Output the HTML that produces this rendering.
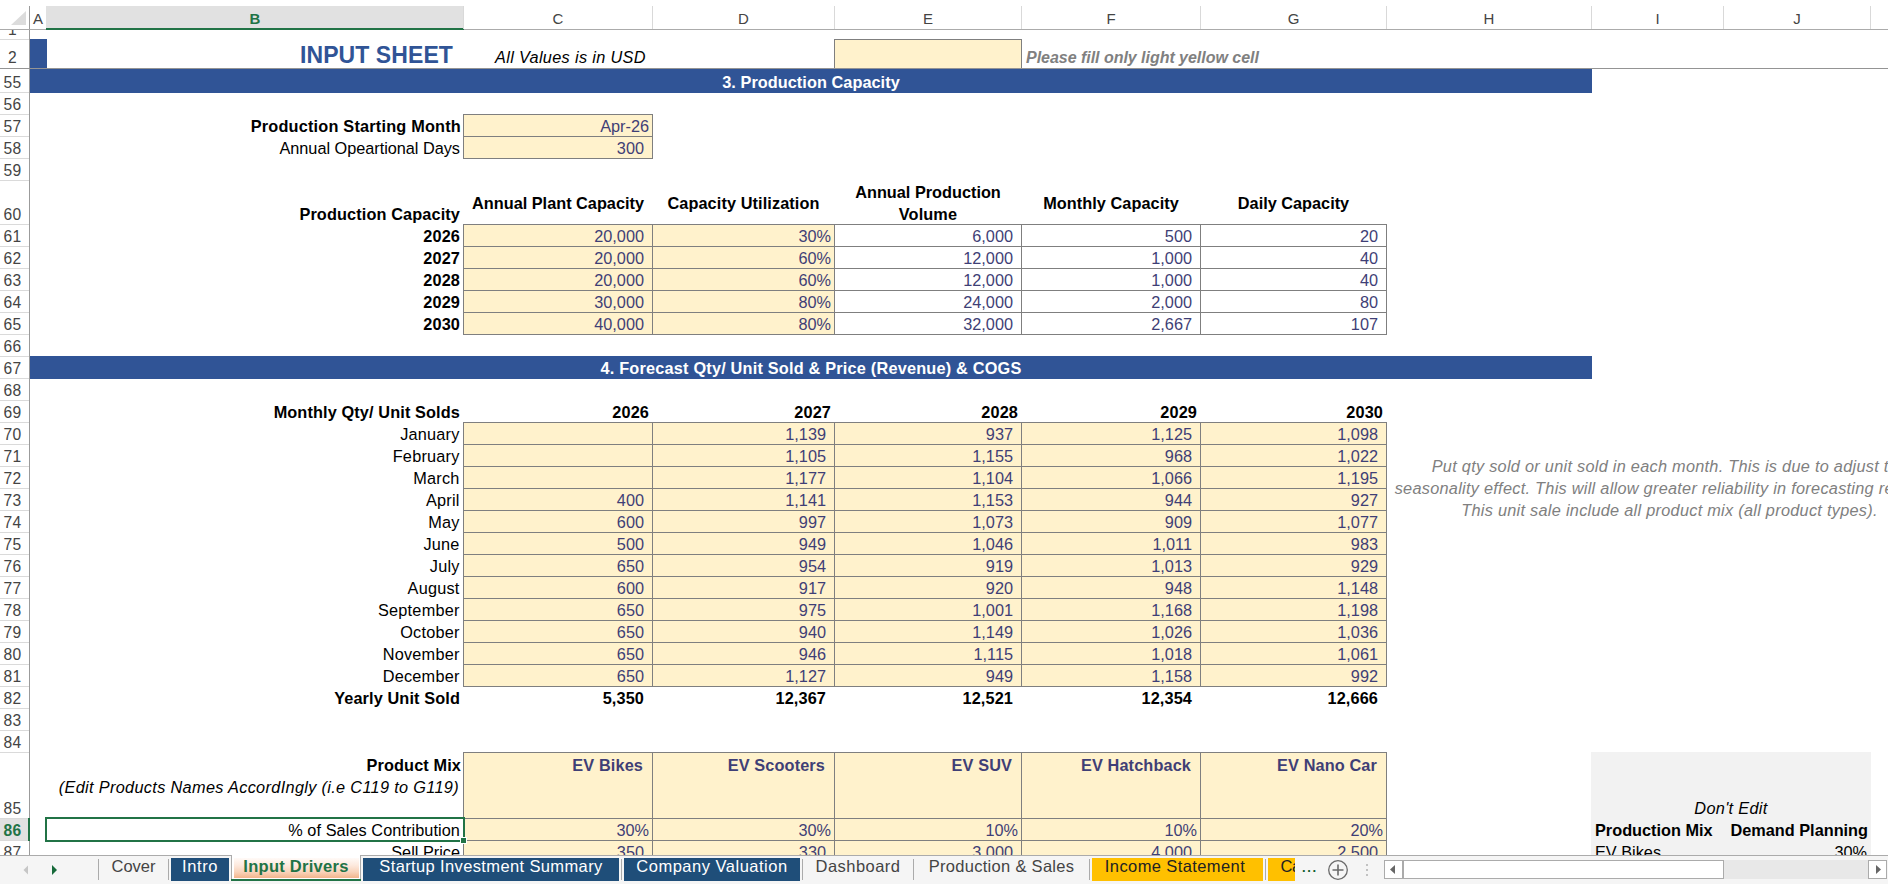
<!DOCTYPE html><html><head><meta charset="utf-8"><title>Input Drivers</title><style>
*{margin:0;padding:0;box-sizing:border-box}
html,body{width:1888px;height:884px;overflow:hidden;background:#fff}
body{position:relative;font-family:"Liberation Sans", sans-serif;font-size:16.3px;color:#000}
.a{position:absolute;white-space:nowrap}
.t{position:absolute;white-space:nowrap;line-height:22px;height:22px}
.r{text-align:right}
.c{text-align:center}
.b{font-weight:bold;letter-spacing:0.12px}
.i{font-style:italic;letter-spacing:0.33px}
.n{color:#3f3f76}
.rh{position:absolute;left:0;width:25px;text-align:center;font-size:15.6px;letter-spacing:0.4px;color:#444;line-height:20.4px;height:20px}
.ch{position:absolute;top:6px;height:23px;line-height:26px;text-align:center;font-size:15px;color:#444}
.tab{position:absolute;top:858px;height:23px;line-height:17px;font-size:16.5px;text-align:center;white-space:nowrap;color:#444}
.sep{position:absolute;top:859px;height:21px;width:1px;background:#ababab}
</style></head><body>
<div class="a" style="left:30px;top:39px;width:17px;height:30px;background:#305496;"></div>
<div class="a" style="left:30px;top:69px;width:1562px;height:24px;background:#305496;"></div>
<div class="a" style="left:30px;top:356px;width:1562px;height:23px;background:#305496;"></div>
<div class="a" style="left:1591px;top:752px;width:280px;height:105px;background:#f2f2f2;"></div>
<div class="a" style="left:834px;top:39px;width:188px;height:30px;background:#fff2cc;border:1px solid #7f7f7f;"></div>
<div class="a" style="left:463px;top:114px;width:190px;height:23px;background:#fff2cc;border:1px solid #7f7f7f;"></div>
<div class="a" style="left:463px;top:136px;width:190px;height:23px;background:#fff2cc;border:1px solid #7f7f7f;"></div>
<div class="a" style="left:463px;top:224px;width:190px;height:23px;background:#fff2cc;border:1px solid #7f7f7f;"></div>
<div class="a" style="left:652px;top:224px;width:183px;height:23px;background:#fff2cc;border:1px solid #7f7f7f;"></div>
<div class="a" style="left:834px;top:224px;width:188px;height:23px;background:#fff;border:1px solid #7f7f7f;"></div>
<div class="a" style="left:1021px;top:224px;width:180px;height:23px;background:#fff;border:1px solid #7f7f7f;"></div>
<div class="a" style="left:1200px;top:224px;width:187px;height:23px;background:#fff;border:1px solid #7f7f7f;"></div>
<div class="a" style="left:463px;top:246px;width:190px;height:23px;background:#fff2cc;border:1px solid #7f7f7f;"></div>
<div class="a" style="left:652px;top:246px;width:183px;height:23px;background:#fff2cc;border:1px solid #7f7f7f;"></div>
<div class="a" style="left:834px;top:246px;width:188px;height:23px;background:#fff;border:1px solid #7f7f7f;"></div>
<div class="a" style="left:1021px;top:246px;width:180px;height:23px;background:#fff;border:1px solid #7f7f7f;"></div>
<div class="a" style="left:1200px;top:246px;width:187px;height:23px;background:#fff;border:1px solid #7f7f7f;"></div>
<div class="a" style="left:463px;top:268px;width:190px;height:23px;background:#fff2cc;border:1px solid #7f7f7f;"></div>
<div class="a" style="left:652px;top:268px;width:183px;height:23px;background:#fff2cc;border:1px solid #7f7f7f;"></div>
<div class="a" style="left:834px;top:268px;width:188px;height:23px;background:#fff;border:1px solid #7f7f7f;"></div>
<div class="a" style="left:1021px;top:268px;width:180px;height:23px;background:#fff;border:1px solid #7f7f7f;"></div>
<div class="a" style="left:1200px;top:268px;width:187px;height:23px;background:#fff;border:1px solid #7f7f7f;"></div>
<div class="a" style="left:463px;top:290px;width:190px;height:23px;background:#fff2cc;border:1px solid #7f7f7f;"></div>
<div class="a" style="left:652px;top:290px;width:183px;height:23px;background:#fff2cc;border:1px solid #7f7f7f;"></div>
<div class="a" style="left:834px;top:290px;width:188px;height:23px;background:#fff;border:1px solid #7f7f7f;"></div>
<div class="a" style="left:1021px;top:290px;width:180px;height:23px;background:#fff;border:1px solid #7f7f7f;"></div>
<div class="a" style="left:1200px;top:290px;width:187px;height:23px;background:#fff;border:1px solid #7f7f7f;"></div>
<div class="a" style="left:463px;top:312px;width:190px;height:23px;background:#fff2cc;border:1px solid #7f7f7f;"></div>
<div class="a" style="left:652px;top:312px;width:183px;height:23px;background:#fff2cc;border:1px solid #7f7f7f;"></div>
<div class="a" style="left:834px;top:312px;width:188px;height:23px;background:#fff;border:1px solid #7f7f7f;"></div>
<div class="a" style="left:1021px;top:312px;width:180px;height:23px;background:#fff;border:1px solid #7f7f7f;"></div>
<div class="a" style="left:1200px;top:312px;width:187px;height:23px;background:#fff;border:1px solid #7f7f7f;"></div>
<div class="a" style="left:463px;top:422px;width:190px;height:23px;background:#fff2cc;border:1px solid #7f7f7f;"></div>
<div class="a" style="left:652px;top:422px;width:183px;height:23px;background:#fff2cc;border:1px solid #7f7f7f;"></div>
<div class="a" style="left:834px;top:422px;width:188px;height:23px;background:#fff2cc;border:1px solid #7f7f7f;"></div>
<div class="a" style="left:1021px;top:422px;width:180px;height:23px;background:#fff2cc;border:1px solid #7f7f7f;"></div>
<div class="a" style="left:1200px;top:422px;width:187px;height:23px;background:#fff2cc;border:1px solid #7f7f7f;"></div>
<div class="a" style="left:463px;top:444px;width:190px;height:23px;background:#fff2cc;border:1px solid #7f7f7f;"></div>
<div class="a" style="left:652px;top:444px;width:183px;height:23px;background:#fff2cc;border:1px solid #7f7f7f;"></div>
<div class="a" style="left:834px;top:444px;width:188px;height:23px;background:#fff2cc;border:1px solid #7f7f7f;"></div>
<div class="a" style="left:1021px;top:444px;width:180px;height:23px;background:#fff2cc;border:1px solid #7f7f7f;"></div>
<div class="a" style="left:1200px;top:444px;width:187px;height:23px;background:#fff2cc;border:1px solid #7f7f7f;"></div>
<div class="a" style="left:463px;top:466px;width:190px;height:23px;background:#fff2cc;border:1px solid #7f7f7f;"></div>
<div class="a" style="left:652px;top:466px;width:183px;height:23px;background:#fff2cc;border:1px solid #7f7f7f;"></div>
<div class="a" style="left:834px;top:466px;width:188px;height:23px;background:#fff2cc;border:1px solid #7f7f7f;"></div>
<div class="a" style="left:1021px;top:466px;width:180px;height:23px;background:#fff2cc;border:1px solid #7f7f7f;"></div>
<div class="a" style="left:1200px;top:466px;width:187px;height:23px;background:#fff2cc;border:1px solid #7f7f7f;"></div>
<div class="a" style="left:463px;top:488px;width:190px;height:23px;background:#fff2cc;border:1px solid #7f7f7f;"></div>
<div class="a" style="left:652px;top:488px;width:183px;height:23px;background:#fff2cc;border:1px solid #7f7f7f;"></div>
<div class="a" style="left:834px;top:488px;width:188px;height:23px;background:#fff2cc;border:1px solid #7f7f7f;"></div>
<div class="a" style="left:1021px;top:488px;width:180px;height:23px;background:#fff2cc;border:1px solid #7f7f7f;"></div>
<div class="a" style="left:1200px;top:488px;width:187px;height:23px;background:#fff2cc;border:1px solid #7f7f7f;"></div>
<div class="a" style="left:463px;top:510px;width:190px;height:23px;background:#fff2cc;border:1px solid #7f7f7f;"></div>
<div class="a" style="left:652px;top:510px;width:183px;height:23px;background:#fff2cc;border:1px solid #7f7f7f;"></div>
<div class="a" style="left:834px;top:510px;width:188px;height:23px;background:#fff2cc;border:1px solid #7f7f7f;"></div>
<div class="a" style="left:1021px;top:510px;width:180px;height:23px;background:#fff2cc;border:1px solid #7f7f7f;"></div>
<div class="a" style="left:1200px;top:510px;width:187px;height:23px;background:#fff2cc;border:1px solid #7f7f7f;"></div>
<div class="a" style="left:463px;top:532px;width:190px;height:23px;background:#fff2cc;border:1px solid #7f7f7f;"></div>
<div class="a" style="left:652px;top:532px;width:183px;height:23px;background:#fff2cc;border:1px solid #7f7f7f;"></div>
<div class="a" style="left:834px;top:532px;width:188px;height:23px;background:#fff2cc;border:1px solid #7f7f7f;"></div>
<div class="a" style="left:1021px;top:532px;width:180px;height:23px;background:#fff2cc;border:1px solid #7f7f7f;"></div>
<div class="a" style="left:1200px;top:532px;width:187px;height:23px;background:#fff2cc;border:1px solid #7f7f7f;"></div>
<div class="a" style="left:463px;top:554px;width:190px;height:23px;background:#fff2cc;border:1px solid #7f7f7f;"></div>
<div class="a" style="left:652px;top:554px;width:183px;height:23px;background:#fff2cc;border:1px solid #7f7f7f;"></div>
<div class="a" style="left:834px;top:554px;width:188px;height:23px;background:#fff2cc;border:1px solid #7f7f7f;"></div>
<div class="a" style="left:1021px;top:554px;width:180px;height:23px;background:#fff2cc;border:1px solid #7f7f7f;"></div>
<div class="a" style="left:1200px;top:554px;width:187px;height:23px;background:#fff2cc;border:1px solid #7f7f7f;"></div>
<div class="a" style="left:463px;top:576px;width:190px;height:23px;background:#fff2cc;border:1px solid #7f7f7f;"></div>
<div class="a" style="left:652px;top:576px;width:183px;height:23px;background:#fff2cc;border:1px solid #7f7f7f;"></div>
<div class="a" style="left:834px;top:576px;width:188px;height:23px;background:#fff2cc;border:1px solid #7f7f7f;"></div>
<div class="a" style="left:1021px;top:576px;width:180px;height:23px;background:#fff2cc;border:1px solid #7f7f7f;"></div>
<div class="a" style="left:1200px;top:576px;width:187px;height:23px;background:#fff2cc;border:1px solid #7f7f7f;"></div>
<div class="a" style="left:463px;top:598px;width:190px;height:23px;background:#fff2cc;border:1px solid #7f7f7f;"></div>
<div class="a" style="left:652px;top:598px;width:183px;height:23px;background:#fff2cc;border:1px solid #7f7f7f;"></div>
<div class="a" style="left:834px;top:598px;width:188px;height:23px;background:#fff2cc;border:1px solid #7f7f7f;"></div>
<div class="a" style="left:1021px;top:598px;width:180px;height:23px;background:#fff2cc;border:1px solid #7f7f7f;"></div>
<div class="a" style="left:1200px;top:598px;width:187px;height:23px;background:#fff2cc;border:1px solid #7f7f7f;"></div>
<div class="a" style="left:463px;top:620px;width:190px;height:23px;background:#fff2cc;border:1px solid #7f7f7f;"></div>
<div class="a" style="left:652px;top:620px;width:183px;height:23px;background:#fff2cc;border:1px solid #7f7f7f;"></div>
<div class="a" style="left:834px;top:620px;width:188px;height:23px;background:#fff2cc;border:1px solid #7f7f7f;"></div>
<div class="a" style="left:1021px;top:620px;width:180px;height:23px;background:#fff2cc;border:1px solid #7f7f7f;"></div>
<div class="a" style="left:1200px;top:620px;width:187px;height:23px;background:#fff2cc;border:1px solid #7f7f7f;"></div>
<div class="a" style="left:463px;top:642px;width:190px;height:23px;background:#fff2cc;border:1px solid #7f7f7f;"></div>
<div class="a" style="left:652px;top:642px;width:183px;height:23px;background:#fff2cc;border:1px solid #7f7f7f;"></div>
<div class="a" style="left:834px;top:642px;width:188px;height:23px;background:#fff2cc;border:1px solid #7f7f7f;"></div>
<div class="a" style="left:1021px;top:642px;width:180px;height:23px;background:#fff2cc;border:1px solid #7f7f7f;"></div>
<div class="a" style="left:1200px;top:642px;width:187px;height:23px;background:#fff2cc;border:1px solid #7f7f7f;"></div>
<div class="a" style="left:463px;top:664px;width:190px;height:23px;background:#fff2cc;border:1px solid #7f7f7f;"></div>
<div class="a" style="left:652px;top:664px;width:183px;height:23px;background:#fff2cc;border:1px solid #7f7f7f;"></div>
<div class="a" style="left:834px;top:664px;width:188px;height:23px;background:#fff2cc;border:1px solid #7f7f7f;"></div>
<div class="a" style="left:1021px;top:664px;width:180px;height:23px;background:#fff2cc;border:1px solid #7f7f7f;"></div>
<div class="a" style="left:1200px;top:664px;width:187px;height:23px;background:#fff2cc;border:1px solid #7f7f7f;"></div>
<div class="a" style="left:463px;top:752px;width:190px;height:67px;background:#fff2cc;border:1px solid #7f7f7f;"></div>
<div class="a" style="left:652px;top:752px;width:183px;height:67px;background:#fff2cc;border:1px solid #7f7f7f;"></div>
<div class="a" style="left:834px;top:752px;width:188px;height:67px;background:#fff2cc;border:1px solid #7f7f7f;"></div>
<div class="a" style="left:1021px;top:752px;width:180px;height:67px;background:#fff2cc;border:1px solid #7f7f7f;"></div>
<div class="a" style="left:1200px;top:752px;width:187px;height:67px;background:#fff2cc;border:1px solid #7f7f7f;"></div>
<div class="a" style="left:463px;top:818px;width:190px;height:23px;background:#fff2cc;border:1px solid #7f7f7f;"></div>
<div class="a" style="left:652px;top:818px;width:183px;height:23px;background:#fff2cc;border:1px solid #7f7f7f;"></div>
<div class="a" style="left:834px;top:818px;width:188px;height:23px;background:#fff2cc;border:1px solid #7f7f7f;"></div>
<div class="a" style="left:1021px;top:818px;width:180px;height:23px;background:#fff2cc;border:1px solid #7f7f7f;"></div>
<div class="a" style="left:1200px;top:818px;width:187px;height:23px;background:#fff2cc;border:1px solid #7f7f7f;"></div>
<div class="a" style="left:463px;top:840px;width:190px;height:23px;background:#fff2cc;border:1px solid #7f7f7f;"></div>
<div class="a" style="left:652px;top:840px;width:183px;height:23px;background:#fff2cc;border:1px solid #7f7f7f;"></div>
<div class="a" style="left:834px;top:840px;width:188px;height:23px;background:#fff2cc;border:1px solid #7f7f7f;"></div>
<div class="a" style="left:1021px;top:840px;width:180px;height:23px;background:#fff2cc;border:1px solid #7f7f7f;"></div>
<div class="a" style="left:1200px;top:840px;width:187px;height:23px;background:#fff2cc;border:1px solid #7f7f7f;"></div>
<div class="a b" style="left:300px;top:42px;font-size:23px;line-height:27px;color:#305496;letter-spacing:0.08px">INPUT SHEET</div>
<div class="a i" style="left:495px;top:46px;line-height:22px">All Values is in USD</div>
<div class="a b i" style="left:1026px;top:47px;font-size:16px;line-height:22px;color:#808080;letter-spacing:-0.03px">Please fill only light yellow cell</div>
<div class="t b c" style="left:30px;width:1562px;top:71px;color:#fff;letter-spacing:0.05px">3. Production Capacity</div>
<div class="t b c" style="left:30px;width:1562px;top:357px;color:#fff;letter-spacing:0.2px">4. Forecast Qty/ Unit Sold &amp; Price (Revenue) &amp; COGS</div>
<div class="t b" style="left:47px;top:115px;width:416px;text-align:right;padding-right:2px;letter-spacing:0.2px;">Production Starting Month</div>
<div class="t " style="left:47px;top:137px;width:416px;text-align:right;padding-right:3px;letter-spacing:-0.02px;">Annual Opeartional Days</div>
<div class="t n" style="left:464px;top:115px;width:188px;text-align:right;padding-right:3px;">Apr-26</div>
<div class="t n" style="left:464px;top:137px;width:188px;text-align:right;padding-right:8px;">300</div>
<div class="t b" style="left:47px;top:203px;width:416px;text-align:right;padding-right:3px;">Production Capacity</div>
<div class="t b" style="left:464px;top:192px;width:188px;text-align:center;letter-spacing:0;">Annual Plant Capacity</div>
<div class="t b" style="left:653px;top:192px;width:181px;text-align:center;letter-spacing:0.1px;">Capacity Utilization</div>
<div class="t b" style="left:835px;top:181px;width:186px;text-align:center;letter-spacing:0;">Annual Production</div>
<div class="t b" style="left:835px;top:203px;width:186px;text-align:center;">Volume</div>
<div class="t b" style="left:1022px;top:192px;width:178px;text-align:center;letter-spacing:0.05px;">Monthly Capacity</div>
<div class="t b" style="left:1201px;top:192px;width:185px;text-align:center;letter-spacing:0;">Daily Capacity</div>
<div class="t b" style="left:47px;top:225px;width:416px;text-align:right;padding-right:3px;">2026</div>
<div class="t n" style="left:464px;top:225px;width:188px;text-align:right;padding-right:8px;">20,000</div>
<div class="t n" style="left:653px;top:225px;width:181px;text-align:right;padding-right:3px;">30%</div>
<div class="t n" style="left:835px;top:225px;width:186px;text-align:right;padding-right:8px;">6,000</div>
<div class="t n" style="left:1022px;top:225px;width:178px;text-align:right;padding-right:8px;">500</div>
<div class="t n" style="left:1201px;top:225px;width:185px;text-align:right;padding-right:8px;">20</div>
<div class="t b" style="left:47px;top:247px;width:416px;text-align:right;padding-right:3px;">2027</div>
<div class="t n" style="left:464px;top:247px;width:188px;text-align:right;padding-right:8px;">20,000</div>
<div class="t n" style="left:653px;top:247px;width:181px;text-align:right;padding-right:3px;">60%</div>
<div class="t n" style="left:835px;top:247px;width:186px;text-align:right;padding-right:8px;">12,000</div>
<div class="t n" style="left:1022px;top:247px;width:178px;text-align:right;padding-right:8px;">1,000</div>
<div class="t n" style="left:1201px;top:247px;width:185px;text-align:right;padding-right:8px;">40</div>
<div class="t b" style="left:47px;top:269px;width:416px;text-align:right;padding-right:3px;">2028</div>
<div class="t n" style="left:464px;top:269px;width:188px;text-align:right;padding-right:8px;">20,000</div>
<div class="t n" style="left:653px;top:269px;width:181px;text-align:right;padding-right:3px;">60%</div>
<div class="t n" style="left:835px;top:269px;width:186px;text-align:right;padding-right:8px;">12,000</div>
<div class="t n" style="left:1022px;top:269px;width:178px;text-align:right;padding-right:8px;">1,000</div>
<div class="t n" style="left:1201px;top:269px;width:185px;text-align:right;padding-right:8px;">40</div>
<div class="t b" style="left:47px;top:291px;width:416px;text-align:right;padding-right:3px;">2029</div>
<div class="t n" style="left:464px;top:291px;width:188px;text-align:right;padding-right:8px;">30,000</div>
<div class="t n" style="left:653px;top:291px;width:181px;text-align:right;padding-right:3px;">80%</div>
<div class="t n" style="left:835px;top:291px;width:186px;text-align:right;padding-right:8px;">24,000</div>
<div class="t n" style="left:1022px;top:291px;width:178px;text-align:right;padding-right:8px;">2,000</div>
<div class="t n" style="left:1201px;top:291px;width:185px;text-align:right;padding-right:8px;">80</div>
<div class="t b" style="left:47px;top:313px;width:416px;text-align:right;padding-right:3px;">2030</div>
<div class="t n" style="left:464px;top:313px;width:188px;text-align:right;padding-right:8px;">40,000</div>
<div class="t n" style="left:653px;top:313px;width:181px;text-align:right;padding-right:3px;">80%</div>
<div class="t n" style="left:835px;top:313px;width:186px;text-align:right;padding-right:8px;">32,000</div>
<div class="t n" style="left:1022px;top:313px;width:178px;text-align:right;padding-right:8px;">2,667</div>
<div class="t n" style="left:1201px;top:313px;width:185px;text-align:right;padding-right:8px;">107</div>
<div class="t b" style="left:47px;top:401px;width:416px;text-align:right;padding-right:3px;">Monthly Qty/ Unit Solds</div>
<div class="t b" style="left:464px;top:401px;width:188px;text-align:right;padding-right:3px;">2026</div>
<div class="t b" style="left:653px;top:401px;width:181px;text-align:right;padding-right:3px;">2027</div>
<div class="t b" style="left:835px;top:401px;width:186px;text-align:right;padding-right:3px;">2028</div>
<div class="t b" style="left:1022px;top:401px;width:178px;text-align:right;padding-right:3px;">2029</div>
<div class="t b" style="left:1201px;top:401px;width:185px;text-align:right;padding-right:3px;">2030</div>
<div class="t " style="left:47px;top:423px;width:416px;text-align:right;padding-right:3.4px;letter-spacing:0.22px;">January</div>
<div class="t n" style="left:653px;top:423px;width:181px;text-align:right;padding-right:8px;">1,139</div>
<div class="t n" style="left:835px;top:423px;width:186px;text-align:right;padding-right:8px;">937</div>
<div class="t n" style="left:1022px;top:423px;width:178px;text-align:right;padding-right:8px;">1,125</div>
<div class="t n" style="left:1201px;top:423px;width:185px;text-align:right;padding-right:8px;">1,098</div>
<div class="t " style="left:47px;top:445px;width:416px;text-align:right;padding-right:3.4px;letter-spacing:0.22px;">February</div>
<div class="t n" style="left:653px;top:445px;width:181px;text-align:right;padding-right:8px;">1,105</div>
<div class="t n" style="left:835px;top:445px;width:186px;text-align:right;padding-right:8px;">1,155</div>
<div class="t n" style="left:1022px;top:445px;width:178px;text-align:right;padding-right:8px;">968</div>
<div class="t n" style="left:1201px;top:445px;width:185px;text-align:right;padding-right:8px;">1,022</div>
<div class="t " style="left:47px;top:467px;width:416px;text-align:right;padding-right:3.4px;letter-spacing:0.22px;">March</div>
<div class="t n" style="left:653px;top:467px;width:181px;text-align:right;padding-right:8px;">1,177</div>
<div class="t n" style="left:835px;top:467px;width:186px;text-align:right;padding-right:8px;">1,104</div>
<div class="t n" style="left:1022px;top:467px;width:178px;text-align:right;padding-right:8px;">1,066</div>
<div class="t n" style="left:1201px;top:467px;width:185px;text-align:right;padding-right:8px;">1,195</div>
<div class="t " style="left:47px;top:489px;width:416px;text-align:right;padding-right:3.4px;letter-spacing:0.22px;">April</div>
<div class="t n" style="left:464px;top:489px;width:188px;text-align:right;padding-right:8px;">400</div>
<div class="t n" style="left:653px;top:489px;width:181px;text-align:right;padding-right:8px;">1,141</div>
<div class="t n" style="left:835px;top:489px;width:186px;text-align:right;padding-right:8px;">1,153</div>
<div class="t n" style="left:1022px;top:489px;width:178px;text-align:right;padding-right:8px;">944</div>
<div class="t n" style="left:1201px;top:489px;width:185px;text-align:right;padding-right:8px;">927</div>
<div class="t " style="left:47px;top:511px;width:416px;text-align:right;padding-right:3.4px;letter-spacing:0.22px;">May</div>
<div class="t n" style="left:464px;top:511px;width:188px;text-align:right;padding-right:8px;">600</div>
<div class="t n" style="left:653px;top:511px;width:181px;text-align:right;padding-right:8px;">997</div>
<div class="t n" style="left:835px;top:511px;width:186px;text-align:right;padding-right:8px;">1,073</div>
<div class="t n" style="left:1022px;top:511px;width:178px;text-align:right;padding-right:8px;">909</div>
<div class="t n" style="left:1201px;top:511px;width:185px;text-align:right;padding-right:8px;">1,077</div>
<div class="t " style="left:47px;top:533px;width:416px;text-align:right;padding-right:3.4px;letter-spacing:0.22px;">June</div>
<div class="t n" style="left:464px;top:533px;width:188px;text-align:right;padding-right:8px;">500</div>
<div class="t n" style="left:653px;top:533px;width:181px;text-align:right;padding-right:8px;">949</div>
<div class="t n" style="left:835px;top:533px;width:186px;text-align:right;padding-right:8px;">1,046</div>
<div class="t n" style="left:1022px;top:533px;width:178px;text-align:right;padding-right:8px;">1,011</div>
<div class="t n" style="left:1201px;top:533px;width:185px;text-align:right;padding-right:8px;">983</div>
<div class="t " style="left:47px;top:555px;width:416px;text-align:right;padding-right:3.4px;letter-spacing:0.22px;">July</div>
<div class="t n" style="left:464px;top:555px;width:188px;text-align:right;padding-right:8px;">650</div>
<div class="t n" style="left:653px;top:555px;width:181px;text-align:right;padding-right:8px;">954</div>
<div class="t n" style="left:835px;top:555px;width:186px;text-align:right;padding-right:8px;">919</div>
<div class="t n" style="left:1022px;top:555px;width:178px;text-align:right;padding-right:8px;">1,013</div>
<div class="t n" style="left:1201px;top:555px;width:185px;text-align:right;padding-right:8px;">929</div>
<div class="t " style="left:47px;top:577px;width:416px;text-align:right;padding-right:3.4px;letter-spacing:0.22px;">August</div>
<div class="t n" style="left:464px;top:577px;width:188px;text-align:right;padding-right:8px;">600</div>
<div class="t n" style="left:653px;top:577px;width:181px;text-align:right;padding-right:8px;">917</div>
<div class="t n" style="left:835px;top:577px;width:186px;text-align:right;padding-right:8px;">920</div>
<div class="t n" style="left:1022px;top:577px;width:178px;text-align:right;padding-right:8px;">948</div>
<div class="t n" style="left:1201px;top:577px;width:185px;text-align:right;padding-right:8px;">1,148</div>
<div class="t " style="left:47px;top:599px;width:416px;text-align:right;padding-right:3.4px;letter-spacing:0.22px;">September</div>
<div class="t n" style="left:464px;top:599px;width:188px;text-align:right;padding-right:8px;">650</div>
<div class="t n" style="left:653px;top:599px;width:181px;text-align:right;padding-right:8px;">975</div>
<div class="t n" style="left:835px;top:599px;width:186px;text-align:right;padding-right:8px;">1,001</div>
<div class="t n" style="left:1022px;top:599px;width:178px;text-align:right;padding-right:8px;">1,168</div>
<div class="t n" style="left:1201px;top:599px;width:185px;text-align:right;padding-right:8px;">1,198</div>
<div class="t " style="left:47px;top:621px;width:416px;text-align:right;padding-right:3.4px;letter-spacing:0.22px;">October</div>
<div class="t n" style="left:464px;top:621px;width:188px;text-align:right;padding-right:8px;">650</div>
<div class="t n" style="left:653px;top:621px;width:181px;text-align:right;padding-right:8px;">940</div>
<div class="t n" style="left:835px;top:621px;width:186px;text-align:right;padding-right:8px;">1,149</div>
<div class="t n" style="left:1022px;top:621px;width:178px;text-align:right;padding-right:8px;">1,026</div>
<div class="t n" style="left:1201px;top:621px;width:185px;text-align:right;padding-right:8px;">1,036</div>
<div class="t " style="left:47px;top:643px;width:416px;text-align:right;padding-right:3.4px;letter-spacing:0.22px;">November</div>
<div class="t n" style="left:464px;top:643px;width:188px;text-align:right;padding-right:8px;">650</div>
<div class="t n" style="left:653px;top:643px;width:181px;text-align:right;padding-right:8px;">946</div>
<div class="t n" style="left:835px;top:643px;width:186px;text-align:right;padding-right:8px;">1,115</div>
<div class="t n" style="left:1022px;top:643px;width:178px;text-align:right;padding-right:8px;">1,018</div>
<div class="t n" style="left:1201px;top:643px;width:185px;text-align:right;padding-right:8px;">1,061</div>
<div class="t " style="left:47px;top:665px;width:416px;text-align:right;padding-right:3.4px;letter-spacing:0.22px;">December</div>
<div class="t n" style="left:464px;top:665px;width:188px;text-align:right;padding-right:8px;">650</div>
<div class="t n" style="left:653px;top:665px;width:181px;text-align:right;padding-right:8px;">1,127</div>
<div class="t n" style="left:835px;top:665px;width:186px;text-align:right;padding-right:8px;">949</div>
<div class="t n" style="left:1022px;top:665px;width:178px;text-align:right;padding-right:8px;">1,158</div>
<div class="t n" style="left:1201px;top:665px;width:185px;text-align:right;padding-right:8px;">992</div>
<div class="t b" style="left:47px;top:687px;width:416px;text-align:right;padding-right:3px;">Yearly Unit Sold</div>
<div class="t b" style="left:464px;top:687px;width:188px;text-align:right;padding-right:8px;">5,350</div>
<div class="t b" style="left:653px;top:687px;width:181px;text-align:right;padding-right:8px;">12,367</div>
<div class="t b" style="left:835px;top:687px;width:186px;text-align:right;padding-right:8px;">12,521</div>
<div class="t b" style="left:1022px;top:687px;width:178px;text-align:right;padding-right:8px;">12,354</div>
<div class="t b" style="left:1201px;top:687px;width:185px;text-align:right;padding-right:8px;">12,666</div>
<div class="t b r" style="left:47px;width:416px;top:754px;padding-right:2px">Product Mix</div>
<div class="t i r" style="left:47px;width:416px;top:776px;padding-right:4px">(Edit Products Names AccordIngly (i.e C119 to G119)</div>
<div class="t b r n" style="left:464px;width:188px;top:754px;padding-right:9px">EV Bikes</div>
<div class="t b r n" style="left:653px;width:181px;top:754px;padding-right:9px">EV Scooters</div>
<div class="t b r n" style="left:835px;width:186px;top:754px;padding-right:9px">EV SUV</div>
<div class="t b r n" style="left:1022px;width:178px;top:754px;padding-right:9px">EV Hatchback</div>
<div class="t b r n" style="left:1201px;width:185px;top:754px;padding-right:9px">EV Nano Car</div>
<div class="t " style="left:47px;top:819px;width:416px;text-align:right;padding-right:3px;letter-spacing:0.07px;">% of Sales Contribution</div>
<div class="t n" style="left:464px;top:819px;width:188px;text-align:right;padding-right:3px;">30%</div>
<div class="t n" style="left:653px;top:819px;width:181px;text-align:right;padding-right:3px;">30%</div>
<div class="t n" style="left:835px;top:819px;width:186px;text-align:right;padding-right:3px;">10%</div>
<div class="t n" style="left:1022px;top:819px;width:178px;text-align:right;padding-right:3px;">10%</div>
<div class="t n" style="left:1201px;top:819px;width:185px;text-align:right;padding-right:3px;">20%</div>
<div class="t " style="left:47px;top:841px;width:416px;text-align:right;padding-right:3px;">Sell Price</div>
<div class="t n" style="left:464px;top:841px;width:188px;text-align:right;padding-right:8px;">350</div>
<div class="t n" style="left:653px;top:841px;width:181px;text-align:right;padding-right:8px;">330</div>
<div class="t n" style="left:835px;top:841px;width:186px;text-align:right;padding-right:8px;">3,000</div>
<div class="t n" style="left:1022px;top:841px;width:178px;text-align:right;padding-right:8px;">4,000</div>
<div class="t n" style="left:1201px;top:841px;width:185px;text-align:right;padding-right:8px;">2,500</div>
<div class="a i c" style="left:1387px;width:565px;top:455px;line-height:22px;color:#808080;letter-spacing:0.28px">Put qty sold or unit sold in each month. This is due to adjust the<br>seasonality effect. This will allow greater reliability in forecasting revenue.<br>This unit sale include all product mix (all product types).</div>
<div class="t i c" style="left:1592px;width:278px;top:797px">Don't Edit</div>
<div class="t b" style="left:1595px;top:819px;letter-spacing:0">Production Mix</div>
<div class="t b r" style="left:1700px;width:168px;top:819px;letter-spacing:0">Demand Planning</div>
<div class="t" style="left:1595px;top:841px">EV Bikes</div>
<div class="t r" style="left:1700px;width:167px;top:841px">30%</div>
<div class="a" style="left:45px;top:817px;width:420px;height:25px;border:2px solid #217346"></div>
<div class="a" style="left:460px;top:837px;width:7px;height:7px;background:#217346;border:1px solid #fff"></div>
<div class="a" style="left:0px;top:0px;width:1888px;height:30px;background:#fff;"></div>
<div class="a" style="left:0;top:29px;width:1888px;height:1px;background:#ababab"></div>
<div class="a" style="left:46px;top:6px;width:418px;height:22px;background:#e1e1e1"></div>
<div class="a" style="left:46px;top:28px;width:418px;height:2px;background:#217346"></div>
<div class="ch" style="left:30px;width:16px;">A</div>
<div class="ch b" style="left:47px;width:416px;color:#217346;">B</div>
<div class="a" style="left:463px;top:6px;width:1px;height:23px;background:#d9d9d9"></div>
<div class="ch" style="left:464px;width:188px;">C</div>
<div class="a" style="left:652px;top:6px;width:1px;height:23px;background:#d9d9d9"></div>
<div class="ch" style="left:653px;width:181px;">D</div>
<div class="a" style="left:834px;top:6px;width:1px;height:23px;background:#d9d9d9"></div>
<div class="ch" style="left:835px;width:186px;">E</div>
<div class="a" style="left:1021px;top:6px;width:1px;height:23px;background:#d9d9d9"></div>
<div class="ch" style="left:1022px;width:178px;">F</div>
<div class="a" style="left:1200px;top:6px;width:1px;height:23px;background:#d9d9d9"></div>
<div class="ch" style="left:1201px;width:185px;">G</div>
<div class="a" style="left:1386px;top:6px;width:1px;height:23px;background:#d9d9d9"></div>
<div class="ch" style="left:1387px;width:204px;">H</div>
<div class="a" style="left:1591px;top:6px;width:1px;height:23px;background:#d9d9d9"></div>
<div class="ch" style="left:1592px;width:131px;">I</div>
<div class="a" style="left:1723px;top:6px;width:1px;height:23px;background:#d9d9d9"></div>
<div class="ch" style="left:1724px;width:146px;">J</div>
<div class="a" style="left:1870px;top:6px;width:1px;height:23px;background:#d9d9d9"></div>
<svg class="a" style="left:0;top:0" width="30" height="30"><polygon points="26,11 26,25 11,25" fill="#dcdcdc"/></svg>
<div class="a" style="left:0px;top:30px;width:29px;height:826px;background:#fff;"></div>
<div class="a" style="left:29px;top:6px;width:1px;height:850px;background:#9b9b9b"></div>
<div class="a" style="left:0px;top:819px;width:28px;height:22px;background:#e1e1e1;"></div>
<div class="a" style="left:0;top:39px;width:29px;height:1px;background:#dadada"></div>
<div class="rh" style="top:20px;">1</div>
<div class="a" style="left:0;top:68px;width:29px;height:1px;background:#dadada"></div>
<div class="rh" style="top:48px;">2</div>
<div class="a" style="left:0;top:92px;width:29px;height:1px;background:#dadada"></div>
<div class="rh" style="top:73px;">55</div>
<div class="a" style="left:0;top:114px;width:29px;height:1px;background:#dadada"></div>
<div class="rh" style="top:95px;">56</div>
<div class="a" style="left:0;top:136px;width:29px;height:1px;background:#dadada"></div>
<div class="rh" style="top:117px;">57</div>
<div class="a" style="left:0;top:158px;width:29px;height:1px;background:#dadada"></div>
<div class="rh" style="top:139px;">58</div>
<div class="a" style="left:0;top:180px;width:29px;height:1px;background:#dadada"></div>
<div class="rh" style="top:161px;">59</div>
<div class="a" style="left:0;top:224px;width:29px;height:1px;background:#dadada"></div>
<div class="rh" style="top:205px;">60</div>
<div class="a" style="left:0;top:246px;width:29px;height:1px;background:#dadada"></div>
<div class="rh" style="top:227px;">61</div>
<div class="a" style="left:0;top:268px;width:29px;height:1px;background:#dadada"></div>
<div class="rh" style="top:249px;">62</div>
<div class="a" style="left:0;top:290px;width:29px;height:1px;background:#dadada"></div>
<div class="rh" style="top:271px;">63</div>
<div class="a" style="left:0;top:312px;width:29px;height:1px;background:#dadada"></div>
<div class="rh" style="top:293px;">64</div>
<div class="a" style="left:0;top:334px;width:29px;height:1px;background:#dadada"></div>
<div class="rh" style="top:315px;">65</div>
<div class="a" style="left:0;top:356px;width:29px;height:1px;background:#dadada"></div>
<div class="rh" style="top:337px;">66</div>
<div class="a" style="left:0;top:378px;width:29px;height:1px;background:#dadada"></div>
<div class="rh" style="top:359px;">67</div>
<div class="a" style="left:0;top:400px;width:29px;height:1px;background:#dadada"></div>
<div class="rh" style="top:381px;">68</div>
<div class="a" style="left:0;top:422px;width:29px;height:1px;background:#dadada"></div>
<div class="rh" style="top:403px;">69</div>
<div class="a" style="left:0;top:444px;width:29px;height:1px;background:#dadada"></div>
<div class="rh" style="top:425px;">70</div>
<div class="a" style="left:0;top:466px;width:29px;height:1px;background:#dadada"></div>
<div class="rh" style="top:447px;">71</div>
<div class="a" style="left:0;top:488px;width:29px;height:1px;background:#dadada"></div>
<div class="rh" style="top:469px;">72</div>
<div class="a" style="left:0;top:510px;width:29px;height:1px;background:#dadada"></div>
<div class="rh" style="top:491px;">73</div>
<div class="a" style="left:0;top:532px;width:29px;height:1px;background:#dadada"></div>
<div class="rh" style="top:513px;">74</div>
<div class="a" style="left:0;top:554px;width:29px;height:1px;background:#dadada"></div>
<div class="rh" style="top:535px;">75</div>
<div class="a" style="left:0;top:576px;width:29px;height:1px;background:#dadada"></div>
<div class="rh" style="top:557px;">76</div>
<div class="a" style="left:0;top:598px;width:29px;height:1px;background:#dadada"></div>
<div class="rh" style="top:579px;">77</div>
<div class="a" style="left:0;top:620px;width:29px;height:1px;background:#dadada"></div>
<div class="rh" style="top:601px;">78</div>
<div class="a" style="left:0;top:642px;width:29px;height:1px;background:#dadada"></div>
<div class="rh" style="top:623px;">79</div>
<div class="a" style="left:0;top:664px;width:29px;height:1px;background:#dadada"></div>
<div class="rh" style="top:645px;">80</div>
<div class="a" style="left:0;top:686px;width:29px;height:1px;background:#dadada"></div>
<div class="rh" style="top:667px;">81</div>
<div class="a" style="left:0;top:708px;width:29px;height:1px;background:#dadada"></div>
<div class="rh" style="top:689px;">82</div>
<div class="a" style="left:0;top:730px;width:29px;height:1px;background:#dadada"></div>
<div class="rh" style="top:711px;">83</div>
<div class="a" style="left:0;top:752px;width:29px;height:1px;background:#dadada"></div>
<div class="rh" style="top:733px;">84</div>
<div class="a" style="left:0;top:818px;width:29px;height:1px;background:#dadada"></div>
<div class="rh" style="top:799px;">85</div>
<div class="a" style="left:0;top:840px;width:29px;height:1px;background:#dadada"></div>
<div class="rh b" style="top:821px;color:#217346;">86</div>
<div class="a" style="left:0;top:862px;width:29px;height:1px;background:#dadada"></div>
<div class="rh" style="top:843px;">87</div>
<div class="a" style="left:0px;top:6px;width:29px;height:24px;background:#fff;"></div>
<div class="a" style="left:0;top:29px;width:30px;height:1px;background:#ababab"></div>
<svg class="a" style="left:0;top:0" width="30" height="30"><polygon points="26,11 26,25 11,25" fill="#dcdcdc"/></svg>
<div class="a" style="left:28px;top:818px;width:2px;height:23px;background:#217346;"></div>
<div class="a" style="left:0;top:68px;width:1888px;height:1px;background:#949494"></div>
<div class="a" style="left:0px;top:855px;width:1888px;height:29px;background:#f5f5f5;"></div>
<div class="a" style="left:0;top:855px;width:1888px;height:1px;background:#ababab"></div>
<svg class="a" style="left:18px;top:861.5px" width="50" height="16"><polygon points="10,3.5 10,12.5 5.5,8" fill="#c6c6c6"/><polygon points="34,3 34,13 39,8" fill="#176a3a"/></svg>
<div class="sep" style="left:98px"></div>
<div class="tab" style="left:99px;width:69px;color:#444;">Cover</div>
<div class="sep" style="left:168px"></div>
<div class="tab" style="left:171px;width:58px;background:#1f4e79;color:#fff;letter-spacing:0.6px;">Intro</div>
<div class="a" style="left:231px;top:855px;width:130px;height:26px;background:#fff;border-left:1px solid #ababab;border-right:1px solid #ababab"></div>
<div class="a" style="left:234px;top:858px;width:125px;height:20px;background:linear-gradient(#fffaf7 0%,#fdeadf 35%,#f9d3ba 70%,#f3b48c 100%)"></div>
<div class="a" style="left:231px;top:879px;width:130px;height:2px;background:#217346"></div>
<div class="tab" style="left:231px;width:130px;color:#217346;font-weight:bold;letter-spacing:0.27px;">Input Drivers</div>
<div class="tab" style="left:363px;width:256px;background:#1f4e79;color:#fff;letter-spacing:0.37px;">Startup Investment Summary</div>
<div class="sep" style="left:621px"></div>
<div class="tab" style="left:624px;width:176px;background:#1f4e79;color:#fff;letter-spacing:0.5px;">Company Valuation</div>
<div class="sep" style="left:802px"></div>
<div class="tab" style="left:803px;width:110px;color:#444;letter-spacing:0.45px;">Dashboard</div>
<div class="sep" style="left:913px"></div>
<div class="tab" style="left:914px;width:175px;color:#444;letter-spacing:0.3px;">Production &amp; Sales</div>
<div class="sep" style="left:1089px"></div>
<div class="tab" style="left:1092px;width:171px;background:#ffc000;color:#222;letter-spacing:0.4px;padding-right:5px;">Income Statement</div>
<div class="sep" style="left:1265px"></div>
<div class="tab" style="left:1268px;width:27px;background:#ffc000;color:#222;overflow:hidden;text-align:left;padding-left:12.5px;letter-spacing:-0.4px">Cash Flow</div>
<div class="a" style="left:1302px;top:857px;color:#0e5c2a;font-weight:bold;font-size:13px;line-height:22px;letter-spacing:1.7px">...</div>
<svg class="a" style="left:1326px;top:858px" width="24" height="24"><circle cx="12" cy="12" r="9.3" fill="none" stroke="#6a6a6a" stroke-width="1.3"/><path d="M12 6.5v11M6.5 12h11" stroke="#6a6a6a" stroke-width="1.6"/></svg>
<svg class="a" style="left:1364px;top:862px" width="6" height="18"><circle cx="3" cy="3" r="1" fill="#b0b0b0"/><circle cx="3" cy="8" r="1" fill="#b0b0b0"/><circle cx="3" cy="13" r="1" fill="#b0b0b0"/></svg>
<div class="a" style="left:1384px;top:860px;width:503px;height:19px;background:#e8e8e8;"></div>
<div class="a" style="left:1384px;top:860px;width:19px;height:19px;background:#fff;border:1px solid #ababab;"></div>
<div class="a" style="left:1403px;top:860px;width:321px;height:19px;background:#fff;border:1px solid #ababab;"></div>
<div class="a" style="left:1868px;top:860px;width:19px;height:19px;background:#fff;border:1px solid #ababab;"></div>
<svg class="a" style="left:1384px;top:860px" width="19" height="19"><polygon points="11,5 11,14 6,9.5" fill="#666"/></svg>
<svg class="a" style="left:1868px;top:860px" width="19" height="19"><polygon points="8,5 8,14 13,9.5" fill="#666"/></svg>
</body></html>
